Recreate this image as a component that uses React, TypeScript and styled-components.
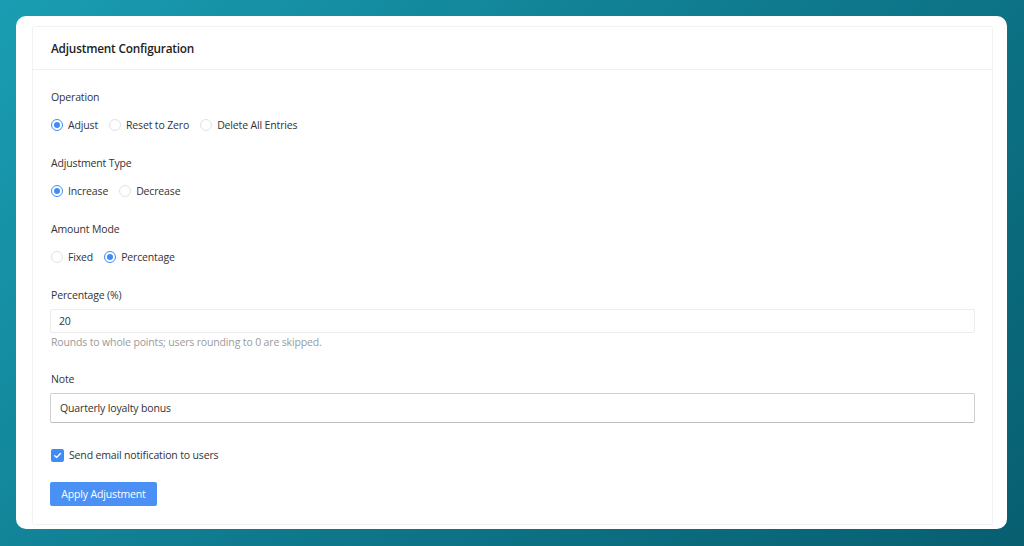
import styled, { createGlobalStyle } from "styled-components";

const Global = createGlobalStyle`
  html, body {
    margin: 0;
    padding: 0;
    height: 100%;
  }
  body {
    font-family: "Open Sans", "Noto Sans", "Liberation Sans", sans-serif;
    background: linear-gradient(135deg, #1a9db2 0%, #0f7a8e 50%, #075f70 100%);
    color: #333;
  }
  * {
    box-sizing: border-box;
  }
`;

const Page = styled.div`
  height: 546px;
  padding: 16px 17px 17px 16px;
`;

const Panel = styled.div`
  height: 100%;
  background: #ffffff;
  border-radius: 10px;
  padding: 10px 14px 4px 16px;
  overflow: hidden;
`;

const Card = styled.div`
  height: 100%;
  border: 1px solid #f2f2f2;
  border-radius: 2px;
`;

const CardHeader = styled.div`
  height: 43px;
  padding: 0 18px;
  display: flex;
  align-items: center;
  border-bottom: 1px solid #f0f0f0;
`;

const Title = styled.div`
  font-size: 11.8px;
  font-weight: 600;
  letter-spacing: -0.2px;
  color: #222;
`;

const CardBody = styled.div`
  padding: 19px 17px 18px 17px;
  font-size: 10.5px;
  letter-spacing: -0.15px;
`;

const Field = styled.div<{ $gap?: number }>`
  margin-bottom: ${(p) => p.$gap ?? 16}px;
`;

const Label = styled.div`
  line-height: 16px;
  color: #333;
  margin-bottom: 6px;
  padding-left: 1px;
`;

const RadioGroup = styled.div`
  display: flex;
  align-items: center;
  gap: 11px;
  padding: 6px 0 6px 1px;
`;

const RadioItem = styled.label`
  display: flex;
  align-items: center;
  gap: 5px;
  line-height: 16px;
  color: #333;
`;

const RadioCircle = styled.span<{ $checked?: boolean }>`
  width: 12px;
  height: 12px;
  border-radius: 50%;
  border: 1px solid ${(p) => (p.$checked ? "#3f8cf6" : "#e2e2e2")};
  display: flex;
  align-items: center;
  justify-content: center;
  &::after {
    content: "";
    width: 6px;
    height: 6px;
    border-radius: 50%;
    background: ${(p) => (p.$checked ? "#3f8cf6" : "transparent")};
  }
`;

const Input = styled.div<{ $strong?: boolean }>`
  width: 100%;
  height: ${(p) => (p.$strong ? 30 : 24)}px;
  display: flex;
  align-items: center;
  padding: 0 ${(p) => (p.$strong ? 9 : 8)}px;
  color: #333;
  border: 1px solid ${(p) => (p.$strong ? "#d0d0d0" : "#ececec")};
  border-bottom-color: ${(p) => (p.$strong ? "#bcbcbc" : "#ececec")};
  border-radius: 2px;
  background: #fff;
`;

const Help = styled.div`
  line-height: 16px;
  color: #9a9a9a;
  margin-top: 1px;
  padding-left: 1px;
`;

const CheckRow = styled.label`
  display: flex;
  align-items: center;
  gap: 5px;
  line-height: 16px;
  color: #333;
  margin-bottom: 19px;
  padding-left: 1px;
`;

const CheckBox = styled.span`
  width: 13px;
  height: 13px;
  border-radius: 2px;
  background: #3f8cf6;
  display: flex;
  align-items: center;
  justify-content: center;
`;

const Button = styled.button`
  height: 24px;
  width: 107px;
  border: none;
  border-radius: 2px;
  background: #4a90f5;
  color: #fff;
  font-family: inherit;
  font-size: 10.5px;
  letter-spacing: -0.15px;
  cursor: pointer;
`;

type Opt = { label: string; checked?: boolean };

const Radios = ({ options }: { options: Opt[] }) => (
  <RadioGroup>
    {options.map((o) => (
      <RadioItem key={o.label}>
        <RadioCircle $checked={o.checked} />
        {o.label}
      </RadioItem>
    ))}
  </RadioGroup>
);

export default function App() {
  return (
    <>
      <Global />
      <Page>
        <Panel>
          <Card>
            <CardHeader>
              <Title>Adjustment Configuration</Title>
            </CardHeader>
            <CardBody>
              <Field>
                <Label>Operation</Label>
                <Radios
                  options={[
                    { label: "Adjust", checked: true },
                    { label: "Reset to Zero" },
                    { label: "Delete All Entries" },
                  ]}
                />
              </Field>
              <Field>
                <Label>Adjustment Type</Label>
                <Radios
                  options={[{ label: "Increase", checked: true }, { label: "Decrease" }]}
                />
              </Field>
              <Field>
                <Label>Amount Mode</Label>
                <Radios
                  options={[{ label: "Fixed" }, { label: "Percentage", checked: true }]}
                />
              </Field>
              <Field $gap={21}>
                <Label>Percentage (%)</Label>
                <Input>20</Input>
                <Help>Rounds to whole points; users rounding to 0 are skipped.</Help>
              </Field>
              <Field $gap={24}>
                <Label>Note</Label>
                <Input $strong>Quarterly loyalty bonus</Input>
              </Field>
              <CheckRow>
                <CheckBox>
                  <svg width="9" height="9" viewBox="0 0 10 10">
                    <path
                      d="M1.8 5.2 L4 7.3 L8.3 2.8"
                      fill="none"
                      stroke="#fff"
                      strokeWidth="1.5"
                      strokeLinecap="round"
                      strokeLinejoin="round"
                    />
                  </svg>
                </CheckBox>
                Send email notification to users
              </CheckRow>
              <Button>Apply Adjustment</Button>
            </CardBody>
          </Card>
        </Panel>
      </Page>
    </>
  );
}
